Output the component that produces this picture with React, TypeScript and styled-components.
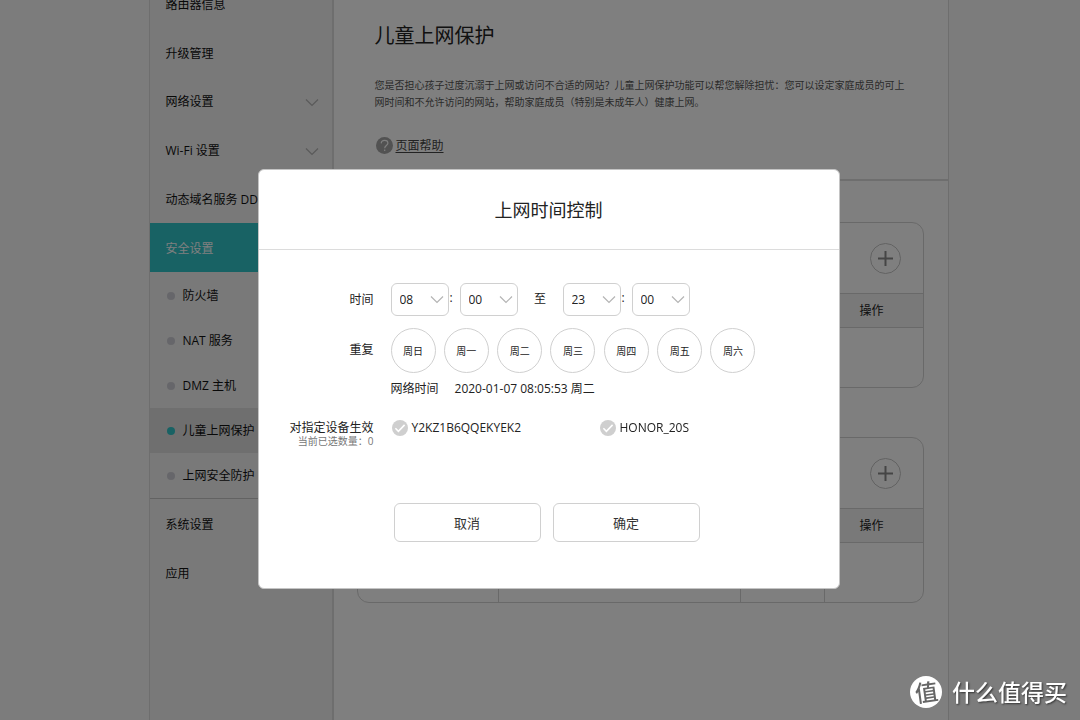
import React from 'react';
import styled, { createGlobalStyle } from 'styled-components';

const teal = '#30c4c8';
const line = '#dcdcdc';

const GlobalStyle = createGlobalStyle`
  * { box-sizing: border-box; }
  body {
    margin: 0;
    overflow: hidden;
    background: #f8f8f8;
    color: #222;
    font: 12px/16px "Open Sans", "Noto Sans CJK SC", sans-serif;
  }
  button, select, input { font: inherit; color: inherit; margin: 0; }
`;

const Page = styled.div`
  display: flex;
  justify-content: center;
  height: 100vh;
  padding-left: 17px;
  overflow: hidden;
`;

const Shell = styled.div`
  display: flex;
  width: 100%;
  max-width: 800px;
  border: solid ${line};
  border-width: 0 1px;
`;

const Sidebar = styled.nav`
  flex: 0 0 184px;
  background: #f2f2f2;
  border-right: 2px solid ${line};
`;

const MenuGroup = styled.div`
  display: grid;
  grid-auto-rows: 1fr;
  height: 243px;
  margin-top: -20px;
`;

const MenuItem = styled.a<{ $active?: boolean }>`
  display: flex;
  align-items: center;
  justify-content: space-between;
  min-height: 48px;
  padding: 2px 13px 0 16px;
  color: ${p => (p.$active ? '#fff' : '#111')};
  background: ${p => (p.$active ? teal : 'transparent')};
  text-decoration: none;
  white-space: nowrap;
`;

const LowerMenu = styled.div`
  ${MenuItem} { height: 49px; }
`;

const SubMenu = styled.div`
  display: grid;
  grid-auto-rows: 1fr;
  height: 227px;
  border-bottom: 1px solid #c4c4c4;
`;

const SubItem = styled.a<{ $current?: boolean }>`
  display: flex;
  align-items: center;
  gap: 8px;
  padding: 2px 0 0 17px;
  color: #111;
  background: ${p => (p.$current ? '#dedede' : 'transparent')};
  text-decoration: none;
  white-space: nowrap;
  &::before {
    content: "";
    width: 8px;
    height: 8px;
    border-radius: 50%;
    background: ${p => (p.$current ? teal : '#cdcdd4')};
  }
`;

const Content = styled.main`
  flex: 1;
  min-width: 0;
  background: #fff;
`;

const Intro = styled.header`
  height: 181px;
  padding: 21px 43px 0 41px;
  border-bottom: 2px solid ${line};
`;

const PageTitle = styled.h1`
  margin: 0;
  font-size: 20px;
  line-height: 30px;
  font-weight: 400;
`;

const Description = styled.p`
  margin: 26px 0 0;
  color: #555;
  font-size: 10px;
  line-height: 17px;
`;

const HelpLink = styled.a`
  display: inline-flex;
  align-items: center;
  gap: 3px;
  margin: 26px 0 0 1px;
  color: #444;
  text-underline-offset: 2px;
`;

const Cards = styled.div`
  display: grid;
  gap: 49px;
  padding: 41px 24px 0 23px;
`;

const Card = styled.section`
  height: 166px;
  border: 1px solid #d2d2d2;
  border-radius: 12px;
  overflow: hidden;
`;

const CardTop = styled.div`
  display: flex;
  align-items: center;
  justify-content: flex-end;
  height: 70px;
  padding-right: 22px;
`;

const AddButton = styled.button`
  display: grid;
  place-items: center;
  width: 31px;
  height: 31px;
  padding: 0;
  border: 1px solid #c4c4c4;
  border-radius: 50%;
  background: none;
`;

const Table = styled.table`
  width: 100%;
  table-layout: fixed;
  border-collapse: collapse;
  th {
    height: 34px;
    padding: 0 4px 0 0;
    background: #f2f2f2;
    border: solid #d2d2d2;
    border-width: 1px 0;
    font-weight: 400;
  }
  td { height: 60px; padding: 0; }
  td + td { border-left: 1px solid #d2d2d2; }
`;

const Overlay = styled.div`
  position: fixed;
  inset: 0;
  display: flex;
  align-items: flex-start;
  justify-content: center;
  padding: 169px 0 0 17px;
  background: rgba(0, 0, 0, 0.5);
`;

const Dialog = styled.form`
  width: 582px;
  height: 420px;
  border: 1px solid #c4c4c4;
  border-radius: 6px;
  background: #fff;
`;

const DialogTitle = styled.h2`
  margin: 0;
  height: 80px;
  border-bottom: 1px solid ${line};
  font-size: 18px;
  line-height: 80px;
  font-weight: 400;
  text-align: center;
`;

const Fields = styled.div`
  display: grid;
  grid-template-columns: 115px 1fr;
  column-gap: 17px;
  padding-top: 33px;
`;

const FieldLabel = styled.div<{ $top: number }>`
  padding-top: ${p => p.$top}px;
  text-align: right;
  white-space: nowrap;
`;

const Count = styled.div`
  color: #777;
  font-size: 10px;
  line-height: 10px;
`;

const TimeRow = styled.div`
  display: flex;
  height: 45px;
`;

const SelectBox = styled.span`
  position: relative;
  width: 58px;
  height: 33px;
  svg {
    position: absolute;
    right: 5px;
    top: 12px;
    pointer-events: none;
  }
`;

const Select = styled.select`
  appearance: none;
  width: 100%;
  height: 100%;
  padding: 0 8px;
  border: 1px solid #d0d0d0;
  border-radius: 6px;
  background: #fff;
`;

const Colon = styled.span`
  width: 11px;
  padding-left: 1px;
  line-height: 30px;
`;

const To = styled.span`
  width: 45px;
  line-height: 32px;
  text-align: center;
`;

const Days = styled.div`
  display: flex;
  justify-content: space-between;
  width: 365px;
`;

const Day = styled.button`
  width: 45px;
  height: 45px;
  padding: 0;
  border: 1px solid #d0d0d0;
  border-radius: 50%;
  background: #fff;
  font-size: 10px;
`;

const NetworkTime = styled.div`
  display: flex;
  gap: 16px;
  height: 47px;
  padding-top: 8px;
  white-space: nowrap;
`;

const Devices = styled.div`
  display: grid;
  grid-template-columns: 208px 1fr;
  height: 83px;
`;

const Device = styled.label`
  position: relative;
  display: flex;
  align-items: center;
  gap: 4px;
  height: 16px;
  padding-left: 1px;
  svg {
    position: absolute;
    left: 1px;
    top: 0;
    pointer-events: none;
  }
`;

const Tick = styled.input`
  appearance: none;
  width: 16px;
  height: 16px;
  border-radius: 50%;
  background: #cfcfcf;
  &:checked { background: ${teal}; }
`;

const Actions = styled.div`
  display: flex;
  justify-content: center;
  gap: 12px;
  padding-right: 4px;
`;

const ActionButton = styled.button`
  width: 147px;
  height: 39px;
  border: 1px solid #d0d0d0;
  border-radius: 6px;
  background: #fff;
  color: #333;
  font-size: 13px;
`;

const Watermark = styled.div`
  position: fixed;
  right: 13px;
  bottom: 12px;
  display: flex;
  align-items: center;
  gap: 10px;
  color: #fff;
  font-size: 23px;
  font-weight: 500;
  line-height: 32px;
  text-shadow: 1px 1px 2px rgba(0, 0, 0, 0.6);
`;

const Badge = styled.span`
  display: grid;
  place-items: center;
  width: 32px;
  height: 32px;
  border-radius: 50%;
  background: #fff;
  color: #666;
  font-size: 23px;
  text-shadow: none;
  span { transform: rotate(-8deg); }
`;

const Chevron = () => (
  <svg width="14" height="9" viewBox="0 0 14 9" fill="none" stroke="#b4b4b4" strokeWidth="1.2" aria-hidden="true">
    <path d="M1 1.5 7 7.5 13 1.5" />
  </svg>
);

const mainMenu = [
  { name: '路由器信息' },
  { name: '升级管理' },
  { name: '网络设置', opens: true },
  { name: 'Wi-Fi 设置', opens: true },
  { name: '动态域名服务 DD' },
];
const subMenu = ['防火墙', 'NAT 服务', 'DMZ 主机', '儿童上网保护', '上网安全防护'];
const days = ['日', '一', '二', '三', '四', '五', '六'];
const devices = ['Y2KZ1B6QQEKYEK2', 'HONOR_20S'];

const TimeSelect = ({ value, label }: { value: string; label: string }) => (
  <SelectBox>
    <Select defaultValue={value} aria-label={label}>
      <option>{value}</option>
    </Select>
    <Chevron />
  </SelectBox>
);

const RuleCard = () => (
  <Card>
    <CardTop>
      <AddButton type="button" aria-label="添加">
        <svg width="17" height="17" viewBox="0 0 17 17" stroke="#8a8a8a" strokeWidth="2">
          <path d="M8.5 1v15M1 8.5h15" />
        </svg>
      </AddButton>
    </CardTop>
    <Table>
      <colgroup>
        <col width="141" />
        <col width="242" />
        <col width="84" />
        <col />
      </colgroup>
      <thead>
        <tr><th /><th /><th /><th scope="col">操作</th></tr>
      </thead>
      <tbody>
        <tr><td /><td /><td /><td /></tr>
      </tbody>
    </Table>
  </Card>
);

export default function App() {
  return (
    <>
      <GlobalStyle />
      <Page>
        <Shell>
          <Sidebar>
            <MenuGroup>
              {mainMenu.map(item => (
                <MenuItem href="#" key={item.name}>
                  {item.name}
                  {item.opens && <Chevron />}
                </MenuItem>
              ))}
            </MenuGroup>
            <LowerMenu>
              <MenuItem href="#" $active>安全设置</MenuItem>
              <SubMenu>
                {subMenu.map(name => (
                  <SubItem href="#" key={name} $current={name === '儿童上网保护'}>{name}</SubItem>
                ))}
              </SubMenu>
              <MenuItem href="#">系统设置</MenuItem>
              <MenuItem href="#">应用</MenuItem>
            </LowerMenu>
          </Sidebar>
          <Content>
            <Intro>
              <PageTitle>儿童上网保护</PageTitle>
              <Description>
                您是否担心孩子过度沉溺于上网或访问不合适的网站？儿童上网保护功能可以帮您解除担忧：您可以设定家庭成员的可上网时间和不允许访问的网站，帮助家庭成员（特别是未成年人）健康上网。
              </Description>
              <HelpLink href="#">
                <svg width="17" height="17" viewBox="0 0 17 17" fill="none" aria-hidden="true">
                  <circle cx="8.5" cy="8.5" r="8.5" fill="#a4a4a4" />
                  <path d="M5.2 6.4C5.3 4.4 6.6 3.4 8.6 3.4s3.3 1 3.3 2.8c0 2.2-3.2 2.5-3.2 5M8.7 12.6v1.3" stroke="#fff" strokeWidth="1.2" />
                </svg>
                页面帮助
              </HelpLink>
            </Intro>
            <Cards>
              <RuleCard />
              <RuleCard />
            </Cards>
          </Content>
        </Shell>
      </Page>
      <Overlay>
        <Dialog role="dialog" aria-labelledby="dialog-title">
          <DialogTitle id="dialog-title">上网时间控制</DialogTitle>
          <Fields>
            <FieldLabel $top={9}>时间</FieldLabel>
            <TimeRow>
              <TimeSelect value="08" label="开始小时" />
              <Colon>:</Colon>
              <TimeSelect value="00" label="开始分钟" />
              <To>至</To>
              <TimeSelect value="23" label="结束小时" />
              <Colon>:</Colon>
              <TimeSelect value="00" label="结束分钟" />
            </TimeRow>
            <FieldLabel $top={14}>重复</FieldLabel>
            <div>
              <Days>
                {days.map(day => <Day type="button" key={day}>周{day}</Day>)}
              </Days>
              <NetworkTime>
                <span>网络时间</span>
                <time>2020-01-07 08:05:53 周二</time>
              </NetworkTime>
            </div>
            <FieldLabel $top={0}>
              对指定设备生效
              <Count>当前已选数量：0</Count>
            </FieldLabel>
            <Devices>
              {devices.map(name => (
                <Device key={name}>
                  <Tick type="checkbox" />
                  <svg width="16" height="16" viewBox="0 0 16 16" fill="none" stroke="#fff" strokeWidth="1.6">
                    <path d="m3.4 8.3 3 3 6.2-6.4" />
                  </svg>
                  {name}
                </Device>
              ))}
            </Devices>
          </Fields>
          <Actions>
            <ActionButton type="button">取消</ActionButton>
            <ActionButton type="button">确定</ActionButton>
          </Actions>
        </Dialog>
      </Overlay>
      <Watermark>
        <Badge><span>值</span></Badge>
        什么值得买
      </Watermark>
    </>
  );
}
